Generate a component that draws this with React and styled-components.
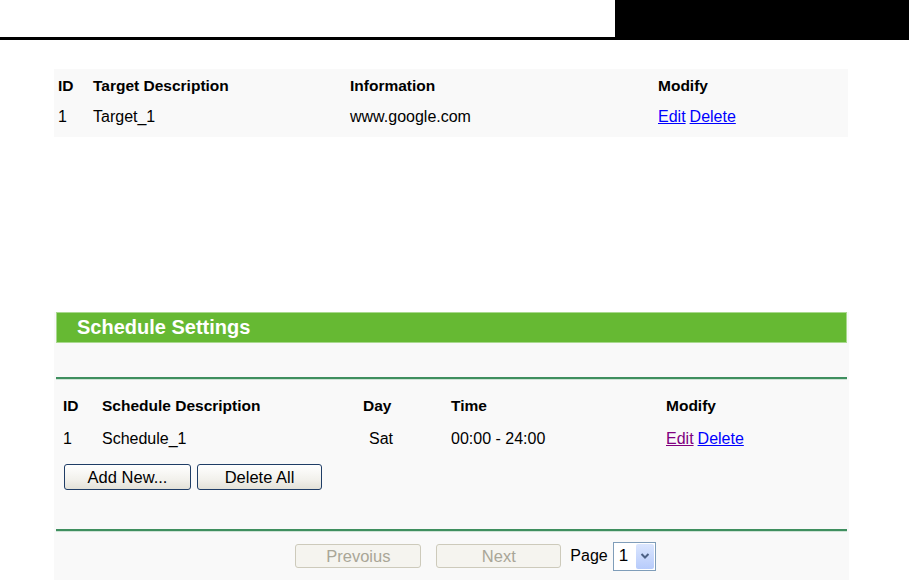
import React from 'react';
import styled, { createGlobalStyle } from 'styled-components';

const GlobalStyle = createGlobalStyle`
  html, body {
    margin: 0;
    padding: 0;
    background: #fff;
  }
  body {
    font-family: "Liberation Sans", Arial, sans-serif;
    color: #000;
    width: 909px;
    height: 580px;
    overflow: hidden;
  }
`;

const Page = styled.div`
  width: 909px;
  height: 580px;
  display: flex;
  flex-direction: column;
`;

const TopBar = styled.header`
  display: flex;
  height: 40px;
`;

const TopRule = styled.div`
  flex: 1;
  border-bottom: 3px solid #000;
`;

const TopBlock = styled.div`
  width: 294px;
  background: #000;
`;

const Panel = styled.section`
  margin: ${({ $top }) => $top}px 0 0 54px;
  width: ${({ $width }) => $width}px;
  background: #f9f9f9;
  padding: ${({ $pad }) => $pad || '0'};
  box-sizing: border-box;
  flex: ${({ $grow }) => ($grow ? 1 : 'none')};
`;

const Row = styled.div`
  display: grid;
  grid-template-columns: ${({ $cols }) => $cols};
  align-items: center;
  height: ${({ $h }) => $h}px;
  margin-top: ${({ $mt }) => $mt || 0}px;
`;

const Cell = styled.div`
  padding-left: ${({ $pl }) => ($pl === undefined ? 4 : $pl)}px;
  font-size: ${({ $head }) => ($head ? 15.5 : 16)}px;
  font-weight: ${({ $head }) => ($head ? 700 : 400)};
  white-space: nowrap;
`;

const Link = styled.a`
  color: ${({ $visited }) => ($visited ? '#800080' : '#0000ff')};
  text-decoration: underline;
  margin-right: 4px;
  cursor: pointer;
`;

const TitleBar = styled.div`
  height: 29px;
  background: #66b933;
  border: 1px solid #a9d98e;
  color: #fff;
  font-size: 20px;
  font-weight: 700;
  display: flex;
  align-items: center;
  padding-left: 20px;
`;

const Divider = styled.div`
  height: 2px;
  background: #3f8f5f;
  box-shadow: 0 1px 0 #cfe3d6;
  margin-top: ${({ $mt }) => $mt}px;
`;

const ButtonRow = styled.div`
  display: flex;
  gap: 6px;
  padding-left: 8px;
  margin-top: 7px;
`;

const Button = styled.button`
  width: ${({ $w }) => $w}px;
  height: ${({ $h }) => $h || 26}px;
  font-family: "Liberation Sans", Arial, sans-serif;
  font-size: 16.5px;
  border-radius: 3px;
  border: 1px solid ${({ disabled }) => (disabled ? '#cdcabb' : '#1f3d66')};
  background: ${({ disabled }) =>
    disabled ? '#f5f4ef' : 'linear-gradient(#ffffff, #f2f1ec 60%, #e3e1d8)'};
  color: ${({ disabled }) => (disabled ? '#a9a697' : '#000')};
  padding: 0;
`;

const Pager = styled.div`
  display: flex;
  align-items: center;
  justify-content: center;
  padding-left: 48px;
  height: 30px;
  margin-top: 10px;
  gap: 15px;
`;

const PageLabel = styled.span`
  font-size: 16px;
  margin-left: -6px;
`;

const SelectBox = styled.div`
  display: flex;
  align-items: stretch;
  width: 41px;
  height: 27px;
  border: 1px solid #7f9db9;
  background: #fff;
  margin-left: -10px;
`;

const SelectValue = styled.span`
  flex: 1;
  font-size: 17px;
  display: flex;
  align-items: center;
  padding-left: 5px;
`;

const SelectArrow = styled.span`
  width: 18px;
  margin: 1px;
  border-radius: 2px;
  background: linear-gradient(#dbe6fe, #b7cbfb);
  display: flex;
  align-items: center;
  justify-content: center;
`;

const targetCols = '39px 257px 308px 1fr';
const scheduleCols = '46px 261px 88px 215px 1fr';

export default function App() {
  return (
    <Page>
      <GlobalStyle />
      <TopBar>
        <TopRule />
        <TopBlock />
      </TopBar>

      <Panel $top={29} $width={794} $pad="1px 0 5px">
        <Row $cols={targetCols} $h={32}>
          <Cell $head>ID</Cell>
          <Cell $head $pl={0}>Target Description</Cell>
          <Cell $head $pl={0}>Information</Cell>
          <Cell $head $pl={0}>Modify</Cell>
        </Row>
        <Row $cols={targetCols} $h={30}>
          <Cell>1</Cell>
          <Cell $pl={0}>Target_1</Cell>
          <Cell $pl={0}>www.google.com</Cell>
          <Cell $pl={0}>
            <Link>Edit</Link>
            <Link>Delete</Link>
          </Cell>
        </Row>
      </Panel>

      <Panel $top={175} $width={795} $pad="0 2px" $grow>
        <TitleBar>Schedule Settings</TitleBar>
        <Divider $mt={34} />
        <Row $cols={scheduleCols} $h={30} $mt={12}>
          <Cell $head $pl={7}>ID</Cell>
          <Cell $head $pl={0}>Schedule Description</Cell>
          <Cell $head $pl={0}>Day</Cell>
          <Cell $head $pl={0}>Time</Cell>
          <Cell $head $pl={0}>Modify</Cell>
        </Row>
        <Row $cols={scheduleCols} $h={36}>
          <Cell $pl={7}>1</Cell>
          <Cell $pl={0}>Schedule_1</Cell>
          <Cell $pl={6}>Sat</Cell>
          <Cell $pl={0}>00:00 - 24:00</Cell>
          <Cell $pl={0}>
            <Link $visited>Edit</Link>
            <Link>Delete</Link>
          </Cell>
        </Row>
        <ButtonRow>
          <Button $w={127}>Add New...</Button>
          <Button $w={125}>Delete All</Button>
        </ButtonRow>
        <Divider $mt={39} />
        <Pager>
          <Button $w={126} $h={24} disabled>Prevoius</Button>
          <Button $w={125} $h={24} disabled>Next</Button>
          <PageLabel>Page</PageLabel>
          <SelectBox>
            <SelectValue>1</SelectValue>
            <SelectArrow>
              <svg width="10" height="8" viewBox="0 0 10 8">
                <path d="M1.5 2 L5 5.5 L8.5 2" fill="none" stroke="#4d6185" strokeWidth="2" />
              </svg>
            </SelectArrow>
          </SelectBox>
        </Pager>
      </Panel>
    </Page>
  );
}
